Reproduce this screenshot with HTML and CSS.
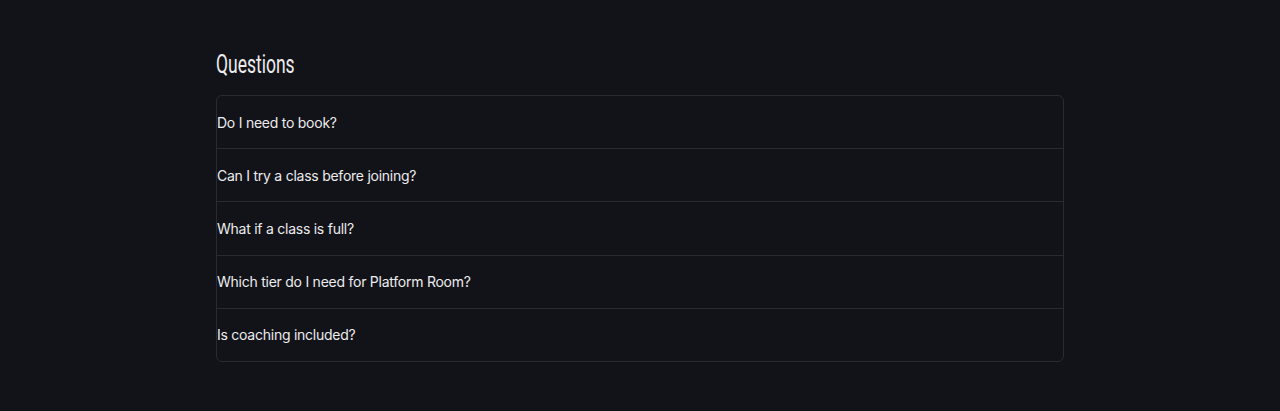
FILE: index.html
```html
<!DOCTYPE html>
<html lang="en">
<head>
    <meta charset="UTF-8">
    <meta name="viewport" content="width=device-width, initial-scale=1.0">
    <title>Questions</title>
    <link rel="stylesheet" href="styles.css">
</head>
<body>
    <section class="faq">
        <h2 class="faq-title"><span>Questions</span></h2>
        <div class="faq-list">
            <button class="faq-item" type="button">Do I need to book?</button>
            <button class="faq-item" type="button">Can I try a class before joining?</button>
            <button class="faq-item" type="button">What if a class is full?</button>
            <button class="faq-item" type="button">Which tier do I need for Platform Room?</button>
            <button class="faq-item" type="button">Is coaching included?</button>
        </div>
    </section>
</body>
</html>
```

FILE: styles.css
```css
*{
    margin: 0;
    padding: 0;
    box-sizing: border-box;
}
body{
    background-color: #121318;
    color: #ececee;
    font-family: Inter, "Noto Sans", sans-serif;
}
.faq{
    max-width: 848px;
    margin: 0 auto;
    padding-top: 48px;
}
.faq-title{
    font-family: Roboto, "Liberation Sans", sans-serif;
    font-weight: normal;
    font-size: 25px;
    line-height: 34px;
    margin-bottom: 13px;
    color: #ececee;
}
.faq-title span{
    display: inline-block;
    transform: scaleX(0.7);
    transform-origin: left center;
}
.faq-list{
    display: flex;
    flex-direction: column;
    border: 1px solid #2a2b31;
    border-radius: 6px;
}
.faq-item{
    display: block;
    width: 100%;
    text-align: left;
    background: none;
    border: none;
    border-top: 1px solid #2a2b31;
    color: #ececee;
    font-family: Inter, "Noto Sans", sans-serif;
    font-size: 14px;
    letter-spacing: -0.25px;
    line-height: 20px;
    padding: 16.5px 0 15.7px;
    cursor: pointer;
}
.faq-item:first-child{
    border-top: none;
}
```
